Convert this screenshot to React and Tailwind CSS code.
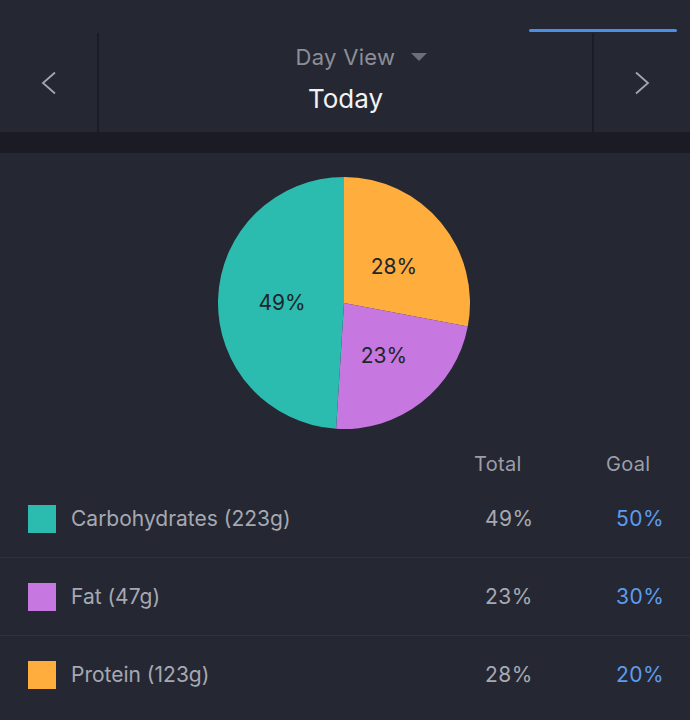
import React from "react";

const slices = [
  { pct: 28, color: "#FFAE3D", label: "28%", lx: 394, ly: 266 },
  { pct: 23, color: "#C777E0", label: "23%", lx: 384, ly: 355 },
  { pct: 49, color: "#2BBBAF", label: "49%", lx: 282, ly: 302 },
];

function Pie() {
  const cx = 126, cy = 126, r = 126;
  let acc = 0;
  const paths = slices.map((s, i) => {
    const a0 = (acc / 100) * Math.PI * 2;
    acc += s.pct;
    const a1 = (acc / 100) * Math.PI * 2;
    const x0 = cx + r * Math.sin(a0), y0 = cy - r * Math.cos(a0);
    const x1 = cx + r * Math.sin(a1), y1 = cy - r * Math.cos(a1);
    const large = a1 - a0 > Math.PI ? 1 : 0;
    return (
      <path
        key={i}
        d={`M${cx} ${cy} L${x0} ${y0} A${r} ${r} 0 ${large} 1 ${x1} ${y1} Z`}
        fill={s.color}
      />
    );
  });
  return (
    <svg width="252" height="252" viewBox="0 0 252 252">
      {paths}
      {slices.map((s, i) => (
        <text
          key={i}
          x={s.lx - 218}
          y={s.ly - 177}
          textAnchor="middle"
          dominantBaseline="central"
          fontSize="21"
          fill="#1D262B"
          style={{ fontFamily: "Inter, sans-serif" }}
        >
          {s.label}
        </text>
      ))}
    </svg>
  );
}

const rows = [
  { name: "Carbohydrates (223g)", color: "bg-[#2BBBAF]", total: "49%", goal: "50%" },
  { name: "Fat (47g)", color: "bg-[#C777E0]", total: "23%", goal: "30%" },
  { name: "Protein (123g)", color: "bg-[#FFAE3D]", total: "28%", goal: "20%" },
];

export default function App() {
  return (
    <div className="w-[690px] h-[720px] overflow-hidden bg-[#252732] font-['Inter',sans-serif]">
      {/* top bar */}
      <div className="h-[33px] flex justify-end">
        <div className="w-[148px] h-[3px] mt-[29px] mr-[13px] rounded-full bg-[#4A8FE7]" />
      </div>
      {/* nav row */}
      <div className="h-[99px] flex">
        <div className="w-[99px] border-r-2 border-[#1B1C25] flex items-center justify-center">
          <svg width="16" height="24" viewBox="0 0 16 24">
            <path d="M14 1.5 L2 12 L14 22.5" fill="none" stroke="#A3A6AF" strokeWidth="1.8" />
          </svg>
        </div>
        <div className="flex-1 flex flex-col items-center pt-[10px]">
          <div className="relative text-[22px] leading-[28px] text-[#8C8F98] tracking-[0.3px]">
            Day View
            <svg width="16" height="8" viewBox="0 0 16 8" className="absolute left-[calc(100%+16px)] top-[10px]">
              <path d="M0 0 L16 0 L8 8 Z" fill="#6C6F78" />
            </svg>
          </div>
          <div className="mt-[12px] text-[26px] leading-[32px] text-[#F2F2F4]">Today</div>
        </div>
        <div className="w-[98px] border-l-2 border-[#1B1C25] flex items-center justify-center">
          <svg width="16" height="24" viewBox="0 0 16 24">
            <path d="M2 1.5 L14 12 L2 22.5" fill="none" stroke="#A3A6AF" strokeWidth="1.8" />
          </svg>
        </div>
      </div>
      {/* dark band */}
      <div className="h-[21px] bg-[#1A1B25]" />
      {/* pie */}
      <div className="flex justify-center pt-[24px]">
        <div className="mr-[3px]">
          <Pie />
        </div>
      </div>
      {/* header */}
      <div className="flex h-[50px] items-end pb-[2px] text-[20px] leading-[26px] text-[#9B9EA7] tracking-[0.3px]">
        <div className="w-[474px]" />
        <div className="w-[132px]">Total</div>
        <div>Goal</div>
      </div>
      {/* rows */}
      <div className="mt-[1px]">
        {rows.map((r, i) => (
          <div
            key={i}
            className={`h-[78px] flex items-center ${i < rows.length - 1 ? "border-b border-[#30323D]" : ""}`}
          >
            <div className={`ml-[28px] w-[28px] h-[28px] ${r.color}`} />
            <div className="ml-[15px] flex-1 text-[21px] leading-[26px] text-[#A6A9B2]">{r.name}</div>
            <div className="w-[131px] text-[21px] leading-[26px] text-[#A6A9B2] tracking-[0.5px]">{r.total}</div>
            <div className="w-[74px] text-[21px] leading-[26px] text-[#5B9CEF] tracking-[0.5px]">{r.goal}</div>
          </div>
        ))}
      </div>
    </div>
  );
}
